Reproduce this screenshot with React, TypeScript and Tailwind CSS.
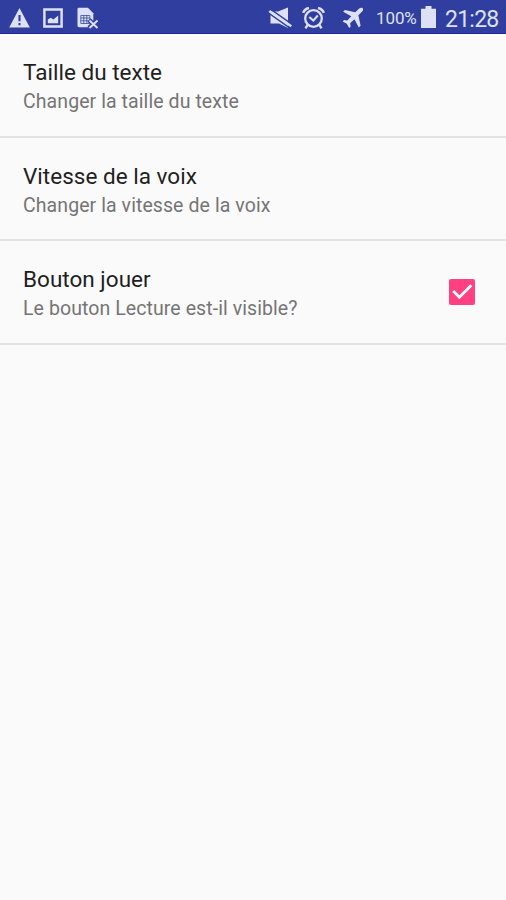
import React from "react";

type Preference = {
  title: string;
  summary: string;
  checked?: boolean;
};

const preferences: Preference[] = [
  { title: "Taille du texte", summary: "Changer la taille du texte" },
  { title: "Vitesse de la voix", summary: "Changer la vitesse de la voix" },
  { title: "Bouton jouer", summary: "Le bouton Lecture est-il visible?", checked: true },
];

function WarningIcon() {
  return (
    <svg className="ml-[9px] h-[21px] w-[21px]" viewBox="0 0 21 21">
      <path d="M10.5 0 20.8 19.5H.2z" fill="currentColor" />
      <path d="M10.5 7v6.2M10.5 15v2.3" stroke="#303f9f" strokeWidth="2.1" />
    </svg>
  );
}

function PictureIcon() {
  return (
    <svg className="ml-[13px] h-5 w-5" viewBox="0 0 20 20">
      <path d="M1.4 1.4h17.2v17.2H1.4z" fill="none" stroke="currentColor" strokeWidth="2.5" />
      <path d="M4.8 15.2v-3.7l3-1.7 2.6 1.6 4.8-4v7.8z" fill="currentColor" />
    </svg>
  );
}

function SimErrorIcon() {
  return (
    <svg className="ml-3.5 h-[22px] w-[22px]" viewBox="0 0 22 22">
      <path d="M.5 2.2Q.5.8 1.9.8H11l5.3 5.4v14H1.9Q.5 20.2.5 18.8z" fill="currentColor" />
      <path d="M3.8 8.5h9v8h-9zM3.8 11h9M3.8 13.8h9M6.8 8.5v8M9.8 8.5v8" fill="none" stroke="#303f9f" strokeOpacity=".75" strokeWidth="1" />
      <path d="m12 13 9 8M21 13l-9 8" stroke="#303f9f" strokeWidth="4.5" />
      <path d="m12.5 13.5 8 7.5M20.5 13.5l-8 7.5" stroke="currentColor" strokeWidth="1.9" />
    </svg>
  );
}

function MutedIcon() {
  return (
    <svg className="h-[23px] w-6" viewBox="0 0 24 23">
      <path d="M2.5 4.5H10L20 .5V21l-9-4.500H2.500z" fill="currentColor" />
      <path d="m-.4 5.400 22 15.400" stroke="#303f9f" strokeWidth="1.500" />
      <path d="m2 1.900 21 14.700" stroke="#303f9f" strokeWidth="1.500" />
      <path d="m1.300 3.900 22 15.400" stroke="currentColor" strokeWidth="2.500" />
    </svg>
  );
}

function AlarmIcon() {
  return (
    <svg className="ml-2.5 mr-px h-[23px] w-[23px]" viewBox="0 0 23 23" fill="none" stroke="currentColor">
      <circle cx="11.5" cy="11.5" r="8.3" strokeWidth="2.3" />
      <path d="M1.2 5.8Q2.5 2 7 1M21.8 5.8Q20.5 2 16 1" strokeWidth="2.5" />
      <path d="m5.5 18-2 3.3M17.5 18l2 3.3" strokeWidth="2.4" />
      <path d="m7.3 10 4 3.5 4.5-5" strokeWidth="2" />
    </svg>
  );
}

function AirplaneIcon() {
  return (
    <svg className="ml-4 h-[22px] w-[22px]" viewBox="0 0 22 22" fill="currentColor">
      <path d="M20.7 1.2c.9.9.3 2.5-.8 3.6l-3.5 3.5 2.2 10.4-1.8 1.8-4.4-8.2-4.3 4 .6 3.2-1.5 1.5-2.4-4.2-4.2-2.4 1.5-1.5 3.2.6 4-4.3L1.1 4.8 2.9 3l10.4 2.2 3.6-3.4c1.2-1 2.9-1.5 3.8-.6z" />
    </svg>
  );
}

function BatteryIcon() {
  return (
    <svg className="ml-1 h-[22px] w-[15px] -translate-y-px" viewBox="0 0 15 22" fill="currentColor">
      <path d="M4.5 0h6v2.7H15V22H0V2.7h4.5z" />
    </svg>
  );
}

function StatusBar() {
  return (
    <header className="flex h-[34px] items-center border-b border-[#1b249a] bg-[#303f9f] pt-[3px] text-[#dde1f5]">
      <WarningIcon />
      <PictureIcon />
      <SimErrorIcon />
      <div className="ml-auto flex items-center pr-2">
        <MutedIcon />
        <AlarmIcon />
        <AirplaneIcon />
        <span className="ml-3 w-[41px] whitespace-nowrap text-[17px] leading-5 tracking-[-0.1px]">100%</span>
        <BatteryIcon />
        <span className="ml-[9px] w-[53px] whitespace-nowrap pt-1 text-[23px] leading-6 tracking-[-0.75px]">21:28</span>
      </div>
    </header>
  );
}

function Checkbox() {
  return (
    <span role="checkbox" aria-checked="true" className="flex h-[26px] w-[26px] items-center justify-center rounded-[2px] bg-[#ff4081]">
      <svg className="h-[26px] w-[26px]" viewBox="0 0 26 26" fill="none">
        <path d="m4.2 12 6.2 6.2L22.3 6.3" stroke="#fafafa" strokeWidth="2.8" />
      </svg>
    </span>
  );
}

export default function App() {
  return (
    <div className="h-[900px] w-[506px] overflow-hidden bg-[#fafafa] font-[Roboto,sans-serif]">
      <StatusBar />
      <main>
        {preferences.map((item) => (
          <section
            key={item.title}
            className="flex h-[103.6px] items-center justify-between border-b-2 border-[#e2e2e2] pl-[23px] pr-[31px]"
          >
            <div className="whitespace-nowrap pt-[5px]">
              <h2 className="text-[22.5px] leading-[30px] tracking-[0.02px] text-[#1f1f1f]">{item.title}</h2>
              <p className="text-[19.5px] leading-[30px] tracking-[0.08px] text-[#757575]">{item.summary}</p>
            </div>
            {item.checked && <Checkbox />}
          </section>
        ))}
      </main>
    </div>
  );
}
